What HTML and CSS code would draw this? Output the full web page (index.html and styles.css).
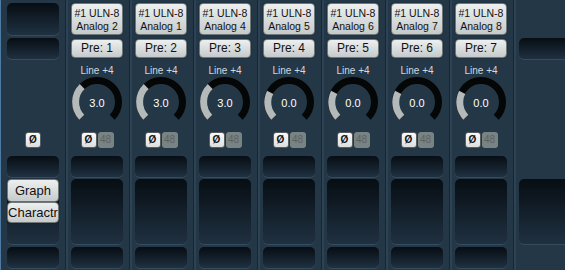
FILE: index.html
```html
<!DOCTYPE html>
<html>
  <head>
    <meta charset="utf-8">
    <title>Mixer</title>
    <link rel="stylesheet" href="styles.css">
  </head>
  <body>
    <div class="mixer">

      <!-- tira izquierda -->
      <div class="strip first">
        <div class="box tall"></div>
        <div class="box slot2"></div>
        <div class="lower">
          <div class="toggles"><span class="phase">Ø</span></div>
          <div class="box small gap1"></div>
          <div class="box big">
            <div class="btn wide graph">Graph</div>
            <div class="btn wide">Charactr</div>
          </div>
          <div class="box small gap2"></div>
        </div>
      </div>

      <!-- canal 1 -->
      <div class="strip">
        <div class="btn name">#1 ULN-8<br>Analog 2</div>
        <div class="btn pre">Pre: 1</div>
        <div class="range">Line +4</div>
        <svg class="knob" width="52" height="46" viewBox="0 0 52 46">
          <path class="track" d="M10.8 40.2 A21.5 21.5 0 1 1 41.2 40.2"/>
          <path class="level" d="M10.8 40.2 A21.5 21.5 0 0 1 11.2 9.6"/>
          <text x="26" y="29.5">3.0</text>
        </svg>
        <div class="lower">
          <div class="toggles"><span class="phase">Ø</span><span class="phantom">48</span></div>
          <div class="box small gap1"></div>
          <div class="box big"></div>
          <div class="box small gap2"></div>
        </div>
      </div>

      <!-- canal 2 -->
      <div class="strip">
        <div class="btn name">#1 ULN-8<br>Analog 1</div>
        <div class="btn pre">Pre: 2</div>
        <div class="range">Line +4</div>
        <svg class="knob" width="52" height="46" viewBox="0 0 52 46">
          <path class="track" d="M10.8 40.2 A21.5 21.5 0 1 1 41.2 40.2"/>
          <path class="level" d="M10.8 40.2 A21.5 21.5 0 0 1 11.2 9.6"/>
          <text x="26" y="29.5">3.0</text>
        </svg>
        <div class="lower">
          <div class="toggles"><span class="phase">Ø</span><span class="phantom">48</span></div>
          <div class="box small gap1"></div>
          <div class="box big"></div>
          <div class="box small gap2"></div>
        </div>
      </div>

      <!-- canal 3 -->
      <div class="strip">
        <div class="btn name">#1 ULN-8<br>Analog 4</div>
        <div class="btn pre">Pre: 3</div>
        <div class="range">Line +4</div>
        <svg class="knob" width="52" height="46" viewBox="0 0 52 46">
          <path class="track" d="M10.8 40.2 A21.5 21.5 0 1 1 41.2 40.2"/>
          <path class="level" d="M10.8 40.2 A21.5 21.5 0 0 1 11.2 9.6"/>
          <text x="26" y="29.5">3.0</text>
        </svg>
        <div class="lower">
          <div class="toggles"><span class="phase">Ø</span><span class="phantom">48</span></div>
          <div class="box small gap1"></div>
          <div class="box big"></div>
          <div class="box small gap2"></div>
        </div>
      </div>

      <!-- canal 4 -->
      <div class="strip">
        <div class="btn name">#1 ULN-8<br>Analog 5</div>
        <div class="btn pre">Pre: 4</div>
        <div class="range">Line +4</div>
        <svg class="knob" width="52" height="46" viewBox="0 0 52 46">
          <path class="track" d="M10.8 40.2 A21.5 21.5 0 1 1 41.2 40.2"/>
          <path class="level" d="M10.8 40.2 A21.5 21.5 0 0 1 7.2 15.3"/>
          <text x="26" y="29.5">0.0</text>
        </svg>
        <div class="lower">
          <div class="toggles"><span class="phase">Ø</span><span class="phantom">48</span></div>
          <div class="box small gap1"></div>
          <div class="box big"></div>
          <div class="box small gap2"></div>
        </div>
      </div>

      <!-- canal 5 -->
      <div class="strip">
        <div class="btn name">#1 ULN-8<br>Analog 6</div>
        <div class="btn pre">Pre: 5</div>
        <div class="range">Line +4</div>
        <svg class="knob" width="52" height="46" viewBox="0 0 52 46">
          <path class="track" d="M10.8 40.2 A21.5 21.5 0 1 1 41.2 40.2"/>
          <path class="level" d="M10.8 40.2 A21.5 21.5 0 0 1 7.2 15.3"/>
          <text x="26" y="29.5">0.0</text>
        </svg>
        <div class="lower">
          <div class="toggles"><span class="phase">Ø</span><span class="phantom">48</span></div>
          <div class="box small gap1"></div>
          <div class="box big"></div>
          <div class="box small gap2"></div>
        </div>
      </div>

      <!-- canal 6 -->
      <div class="strip">
        <div class="btn name">#1 ULN-8<br>Analog 7</div>
        <div class="btn pre">Pre: 6</div>
        <div class="range">Line +4</div>
        <svg class="knob" width="52" height="46" viewBox="0 0 52 46">
          <path class="track" d="M10.8 40.2 A21.5 21.5 0 1 1 41.2 40.2"/>
          <path class="level" d="M10.8 40.2 A21.5 21.5 0 0 1 7.2 15.3"/>
          <text x="26" y="29.5">0.0</text>
        </svg>
        <div class="lower">
          <div class="toggles"><span class="phase">Ø</span><span class="phantom">48</span></div>
          <div class="box small gap1"></div>
          <div class="box big"></div>
          <div class="box small gap2"></div>
        </div>
      </div>

      <!-- canal 7 -->
      <div class="strip">
        <div class="btn name">#1 ULN-8<br>Analog 8</div>
        <div class="btn pre">Pre: 7</div>
        <div class="range">Line +4</div>
        <svg class="knob" width="52" height="46" viewBox="0 0 52 46">
          <path class="track" d="M10.8 40.2 A21.5 21.5 0 1 1 41.2 40.2"/>
          <path class="level" d="M10.8 40.2 A21.5 21.5 0 0 1 7.2 15.3"/>
          <text x="26" y="29.5">0.0</text>
        </svg>
        <div class="lower">
          <div class="toggles"><span class="phase">Ø</span><span class="phantom">48</span></div>
          <div class="box small gap1"></div>
          <div class="box big"></div>
          <div class="box small gap2"></div>
        </div>
      </div>

      <!-- tira derecha (master) -->
      <div class="strip">
        <div class="empty"></div>
        <div class="box slot2"></div>
        <div class="lower">
          <div class="toggles"></div>
          <div class="box small gap1 blank"></div>
          <div class="box big"></div>
          <div class="box small gap2 blank"></div>
        </div>
      </div>

    </div>
  </body>
</html>
```

FILE: styles.css
```css
body {
  margin: 0;
  background: #243747;
  font-family: "Liberation Sans", Arial, sans-serif;
  overflow: hidden;
}

.mixer {
  display: flex;
  width: 565px;
  height: 270px;
  overflow: hidden;
}

/* cada tira de canal */
.strip {
  flex: 0 0 64px;
  box-sizing: border-box;
  display: flex;
  flex-direction: column;
  align-items: center;
  padding: 3px 0 2px;
  box-shadow: inset 1px 0 #19262f, inset 3px 0 #2d4253;
}

.strip.first {
  flex-basis: 65px;
  border-left: 1px solid #4d7ba3;
  box-shadow: none;
}

.lower {
  margin-top: auto;
  display: flex;
  flex-direction: column;
  align-items: center;
}

/* cajas oscuras */
.box {
  width: 52px;
  box-sizing: border-box;
  border-radius: 5px;
  background: linear-gradient(#070d13, #1f3141);
  box-shadow: 0 1px 0 #364c5d;
  flex-shrink: 0;
}

.box.tall { height: 32px; }
.box.slot2 { height: 21px; margin-top: 3px; }
.box.small { height: 21px; }
.box.gap1 { margin-top: 8px; }
.box.gap2 { margin-top: 3px; }
.box.big { height: 65px; margin-top: 2px; }

.box.blank {
  background: none;
  box-shadow: none;
}

.empty {
  height: 32px;
  flex-shrink: 0;
}

/* botones grises */
.btn {
  width: 52px;
  box-sizing: border-box;
  border: 1px solid #6f7878;
  border-radius: 4px;
  background: linear-gradient(#eef0f0, #c6caca);
  box-shadow: 0 0 1px #0c1418;
  color: #111;
  text-align: center;
  flex-shrink: 0;
}

.btn.name {
  height: 32px;
  padding-top: 3px;
  font-size: 10.5px;
  line-height: 13px;
}

.btn.pre {
  height: 19px;
  margin-top: 4px;
  font-size: 12px;
  line-height: 17px;
}

.btn.wide {
  height: 21px;
  font-size: 13px;
  line-height: 19px;
}

.btn.graph {
  height: 23px;
  line-height: 21px;
}

.range {
  margin-top: 6px;
  height: 13px;
  font-size: 10px;
  line-height: 13px;
  color: #d2d8dc;
}

/* potenciometro */
.knob {
  margin-top: 0;
  flex-shrink: 0;
}

.knob path {
  fill: none;
  stroke-width: 7;
}

.knob .track { stroke: #050606; }
.knob .level { stroke: #b4b9b9; }

.knob text {
  fill: #fff;
  font-size: 11px;
  text-anchor: middle;
}

/* fase y phantom */
.toggles {
  display: flex;
  gap: 1px;
  height: 16px;
}

.phase,
.phantom {
  width: 16px;
  height: 16px;
  box-sizing: border-box;
  border-radius: 3px;
  font-size: 10px;
  line-height: 16px;
  text-align: center;
}

.phase {
  background: linear-gradient(#fafafa, #dedede);
  border: 1px solid #58605f;
  line-height: 14px;
  font-weight: bold;
  color: #111;
}

.phantom {
  background: #7a8383;
  color: #5a6262;
}
```
